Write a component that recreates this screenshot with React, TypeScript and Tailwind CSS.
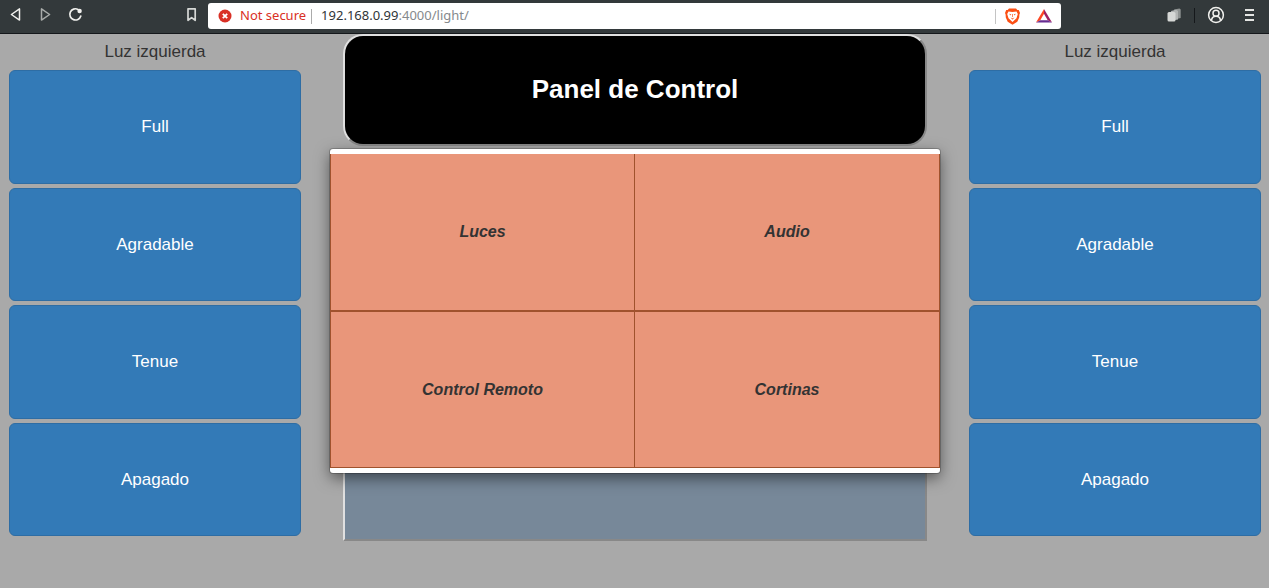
import React from "react";

const scenes = ["Full", "Agradable", "Tenue", "Apagado"];
const sections = ["Luces", "Audio", "Control Remoto", "Cortinas"];

function IconButton({ label, className = "", children }: { label: string; className?: string; children: React.ReactNode }) {
  return (
    <button type="button" aria-label={label} className={`flex shrink-0 items-center justify-center ${className}`}>
      {children}
    </button>
  );
}

function BrowserBar() {
  return (
    <header className="flex h-[34px] items-center border-b border-[#15181b] bg-[#33393b] pb-[3px]">
      <div className="flex w-[208px] shrink-0 items-center pl-2">
        <IconButton label="Back" className="size-4">
          <svg viewBox="0 0 16 16" className="size-4" fill="none" stroke="#f1f1ee" strokeWidth="1.5" strokeLinejoin="round">
            <path d="M11.5 1.9v11.2L3.4 7.5z" />
          </svg>
        </IconButton>
        <IconButton label="Forward" className="ml-[14px] size-4">
          <svg viewBox="0 0 16 16" className="size-4" fill="none" stroke="#a9acaa" strokeWidth="1.5" strokeLinejoin="round">
            <path d="M3.5 1.9v11.2L11.6 7.5z" />
          </svg>
        </IconButton>
        <IconButton label="Reload" className="ml-[14px] size-4">
          <svg viewBox="0 0 16 16" className="size-4" fill="none">
            <path d="M10 2.4A5.6 5.6 0 1 0 12.8 9" stroke="#f1f1ee" strokeWidth="1.7" strokeLinecap="round" />
            <circle cx="11.6" cy="4" r="2.2" fill="#f1f1ee" />
          </svg>
        </IconButton>
        <IconButton label="Bookmark" className="mr-2 ml-auto size-4">
          <svg viewBox="0 0 16 16" className="size-4" fill="none" stroke="#d6d8d6" strokeWidth="1.7" strokeLinejoin="round">
            <path d="M4 1.800h7.200v11.500L7.600 10.600l-3.600 2.700z" />
          </svg>
        </IconButton>
      </div>
      <div className="mt-[2px] flex h-[26px] w-full max-w-[853px] min-w-0 items-center rounded-[3px] bg-white font-['Noto_Sans','Open_Sans',sans-serif] text-[13px]">
        <svg viewBox="0 0 14 14" className="ml-[10px] size-[14px] shrink-0">
          <circle cx="7" cy="7" r="6.500" fill="#d93025" />
          <path d="M4.800 4.800l4.400 4.400M9.200 4.800l-4.400 4.400" stroke="#fff" strokeWidth="1.800" />
        </svg>
        <span className="ml-2 shrink-0 text-[#d93025]">Not secure</span>
        <span className="ml-[5px] h-[15px] w-px shrink-0 bg-[#ababab]" />
        <span className="ml-[9px] text-[#85898c]">
          <span className="text-[#303437]">192.168.0.99</span>:4000/light/
        </span>
        <span className="ml-auto h-[15px] w-px shrink-0 bg-[#c4c4c4]" />
        <IconButton label="Brave Shields" className="ml-2 size-[17px]">
          <svg viewBox="0 0 17 17" className="size-[17px]">
            <path d="M5 .500h7l1.300 1.500h1.500l1.200 3-.600 1.500-.200 3-1.900 4.300-4.800 3-4.800-3L1.800 9.500l-.200-3L1 5l1.200-3h1.500z" fill="#fb4f14" />
            <path d="M4.500 3.500l4 .500 4-.500 1.300 2.500-1.300 4.200-4 3.800-4-3.800-1.300-4.200z" fill="#fff" />
            <path d="M5 5.800l2.300.500-.7 1.200zM12 5.800l-2.300.500.700 1.200zM8.100 6h.8v3h-.8zM6.500 9.600l2 .700 2-.700-2 2.200z" fill="#fb6a38" />
          </svg>
        </IconButton>
        <IconButton label="Brave Rewards" className="mr-2 ml-[14px] size-[18px]">
          <svg viewBox="0 0 18 18" className="size-[18px]">
            <path d="M9 2L1 15.500 5.300 13.200 9 6.800z" fill="#ff4724" />
            <path d="M9 2l8 13.500-4.300-2.300L9 6.800z" fill="#9e1f63" />
            <path d="M1 15.500h16l-4.300-2.300H5.300z" fill="#662d91" />
          </svg>
        </IconButton>
      </div>
      <div className="ml-auto flex shrink-0 items-center pr-3">
        <IconButton label="Extensions" className="size-4">
          <svg viewBox="0 0 16 16" className="size-4">
            <path d="M8 2.500l5.500-1 1.200 1V11l-6 1.500z" fill="#8f9392" />
            <path d="M5 4l5-1.200 2 1.200v8.500L6 13.500z" fill="#b2b5b4" />
            <rect x="1.500" y="5" width="8" height="9.500" rx="1.500" fill="#d6d8d6" />
          </svg>
        </IconButton>
        <span className="ml-[12px] h-[15px] w-px bg-[#15181b]" />
        <IconButton label="Profile" className="ml-[12px] size-[18px]">
          <svg viewBox="0 0 18 18" className="size-[18px]" fill="none" stroke="#f1f1ee" strokeWidth="1.500">
            <circle cx="9" cy="9" r="7.400" />
            <circle cx="9" cy="7.300" r="3" />
            <path d="M4.500 14.300c.300-2.300 2-4 4.500-4s4.200 1.700 4.500 4" />
          </svg>
        </IconButton>
        <IconButton label="Menu" className="ml-[16px] size-4">
          <svg viewBox="0 0 16 16" className="size-4" stroke="#e4e5e3" strokeWidth="2">
            <path d="M4 3h9M4 8h9M4 13h9" />
          </svg>
        </IconButton>
      </div>
    </header>
  );
}

function LightColumn() {
  return (
    <section className="flex flex-col">
      <h2 className="pt-[5px] text-center text-[17px] leading-[26px] text-[#333333]">Luz izquierda</h2>
      <div className="mt-[5px] grid min-h-[466px] auto-rows-fr gap-1">
        {scenes.map((scene) => (
          <button key={scene} type="button" className="rounded-md border border-[#2e6da4] bg-[#337ab7] text-[17px] text-white">
            {scene}
          </button>
        ))}
      </div>
    </section>
  );
}

function ControlPanel() {
  return (
    <main className="relative self-start">
      <div className="flex h-28 items-center justify-center rounded-[20px] border-2 border-t-[#e0e0e0] border-r-[#888888] border-b-[#888888] border-l-[#e0e0e0] bg-black pb-[2px]">
        <h1 className="text-[26px] font-bold text-white">Panel de Control</h1>
      </div>
      <div className="mt-2 h-[387px] border-2 border-t-[#e0e0e0] border-r-[#888888] border-b-[#888888] border-l-[#e0e0e0] bg-[#778899]" />
      <nav className="absolute -inset-x-[13px] top-[115px] rounded-[3px] bg-white py-[5px] shadow-[0_0_0_1px_rgba(0,0,0,0.200),0_5px_15px_rgba(0,0,0,0.500)]">
        <div className="grid grid-cols-2">
          {sections.map((section) => (
            <button
              key={section}
              type="button"
              className="h-[157px] border border-[#a0522d] bg-[#e9967a] text-[16px] font-bold text-[#333333] italic even:border-l-0 [&:nth-child(-n+2)]:border-t-0"
            >
              {section}
            </button>
          ))}
        </div>
      </nav>
    </main>
  );
}

export default function App() {
  return (
    <div className="min-h-screen bg-[#a9a9a9] font-['Liberation_Sans',Arial,sans-serif]">
      <BrowserBar />
      <div className="grid grid-cols-[1fr_2fr_1fr] gap-x-[42px] pr-2 pl-[9px]">
        <LightColumn />
        <ControlPanel />
        <LightColumn />
      </div>
    </div>
  );
}
